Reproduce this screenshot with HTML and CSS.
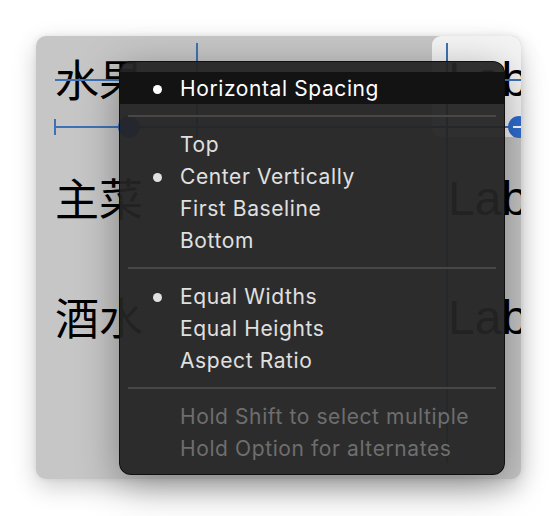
FILE: index.html
```html
<!DOCTYPE html>
<html lang="zh">
<head>
<meta charset="utf-8">
<title>Constraints menu</title>
<link rel="stylesheet" href="styles.css">
</head>
<body>
<div class="stage">
  <div class="panel">
    <div class="sel-cell"></div>
    <div class="rows">
      <div class="cjk">水果</div><div class="lbl">Label</div>
      <div class="cjk">主菜</div><div class="lbl">Label</div>
      <div class="cjk">酒水</div><div class="lbl">Label</div>
    </div>
    <div class="guide gh"></div>
    <div class="guide gv1"></div>
    <div class="guide gv2"></div>
    <div class="beam"></div>
    <div class="beam-cap"></div>
    <div class="knob knob-l"></div>
    <div class="knob knob-r"><span class="minus"></span></div>
  </div>
  <div class="menu">
    <div class="item on"><span class="dot"></span>Horizontal Spacing</div>
    <div class="sep"></div>
    <div class="item">Top</div>
    <div class="item"><span class="dot"></span>Center Vertically</div>
    <div class="item">First Baseline</div>
    <div class="item">Bottom</div>
    <div class="sep"></div>
    <div class="item"><span class="dot"></span>Equal Widths</div>
    <div class="item">Equal Heights</div>
    <div class="item">Aspect Ratio</div>
    <div class="sep"></div>
    <div class="item hint">Hold Shift to select multiple</div>
    <div class="item hint">Hold Option for alternates</div>
  </div>
</div>
</body>
</html>
```

FILE: styles.css
```css
html, body {
  margin: 0;
  padding: 0;
  background: #ffffff;
}
.stage {
  position: relative;
  width: 558px;
  height: 516px;
  padding: 36px 0 0 36px;
  box-sizing: border-box;
}
.panel {
  position: relative;
  width: 485px;
  height: 443px;
  border-radius: 10px;
  background: #c6c6c6;
  overflow: hidden;
  box-shadow: 0 8px 24px rgba(0, 0, 0, 0.2), 0 0 6px rgba(0, 0, 0, 0.08);
}
.sel-cell {
  position: absolute;
  left: 396px;
  top: 0;
  width: 89px;
  height: 101px;
  background: #f4f4f4;
  border-radius: 9px 0 0 9px;
}
.rows {
  position: relative;
  display: grid;
  grid-template-columns: 393px 1fr;
  grid-template-rows: 88px 88px 88px;
  row-gap: 31px;
  padding-left: 19px;
  align-items: center;
}
.cjk {
  font-family: "Noto Sans CJK SC", sans-serif;
  font-size: 44px;
  line-height: 1;
  color: #000;
  white-space: nowrap;
  margin-top: -4px;
}
.lbl {
  font-family: "Liberation Sans", Arial, sans-serif;
  font-size: 48px;
  line-height: 1;
  color: #000;
  white-space: nowrap;
}
.guide {
  position: absolute;
  background: #3f72b4;
}
.gh {
  left: 19px;
  right: 0;
  top: 43px;
  height: 2px;
}
.gv1 {
  left: 160px;
  top: 7px;
  width: 2px;
  height: 95px;
}
.gv2 {
  left: 410px;
  top: 7px;
  width: 2px;
  height: 420px;
}
.beam {
  position: absolute;
  left: 19px;
  right: 0;
  top: 90px;
  height: 2px;
  background: #3f72b4;
}
.beam-cap {
  position: absolute;
  left: 18px;
  top: 83px;
  width: 2px;
  height: 16px;
  background: #3f72b4;
}
.knob {
  position: absolute;
  width: 22px;
  height: 22px;
  border-radius: 50%;
  background: #2f6ccf;
  top: 80px;
}
.knob-l {
  left: 82px;
}
.knob-r {
  left: 472px;
}
.minus {
  position: absolute;
  left: 5px;
  top: 10px;
  width: 12px;
  height: 2px;
  background: #fff;
}
.menu {
  position: absolute;
  left: 119px;
  top: 61px;
  width: 386px;
  height: 414px;
  box-sizing: border-box;
  padding: 10px 0;
  border: 1px solid rgba(10, 10, 10, 0.85);
  border-radius: 12px;
  background: rgba(36, 36, 36, 0.95);
  box-shadow: 0 10px 40px rgba(0, 0, 0, 0.35);
  font-family: "Inter", "Noto Sans", sans-serif;
  font-size: 21px;
  letter-spacing: 0.6px;
  color: #e0e0e0;
}
.item {
  position: relative;
  height: 32px;
  box-sizing: border-box;
  padding-top: 1px;
  line-height: 32px;
  padding-left: 60px;
  white-space: nowrap;
}
.item.on {
  background: #131313;
  color: #ffffff;
}
.item.hint {
  color: #6e6e6e;
}
.dot {
  position: absolute;
  left: 33px;
  top: 50%;
  width: 9px;
  height: 9px;
  margin-top: -3px;
  border-radius: 50%;
  background: currentColor;
}
.sep {
  height: 2px;
  margin: 11px 8px;
  background: #474747;
}
```
